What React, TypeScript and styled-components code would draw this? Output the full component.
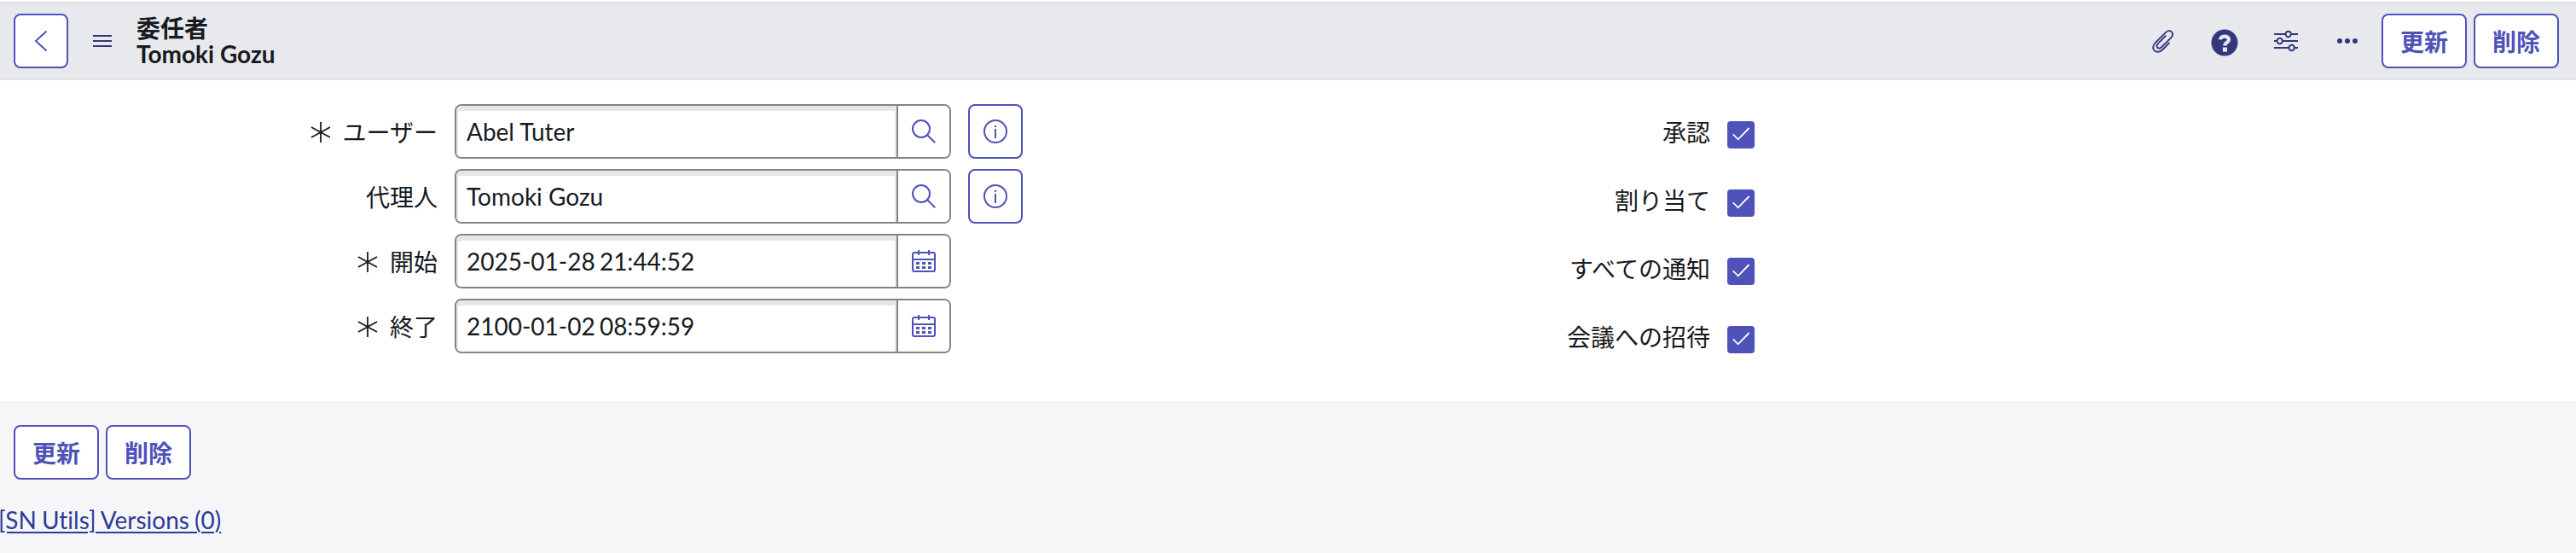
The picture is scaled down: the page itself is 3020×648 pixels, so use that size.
import React from "react";
import styled, { createGlobalStyle, css } from "styled-components";

const primary = "#4f52b8";
const dark = "#34377c";
const ink = "#181a21";
const fieldBorder = "#81848f";

const GlobalStyle = createGlobalStyle`
  * { box-sizing: border-box; }
  body {
    margin: 0;
    background: #fff;
    color: ${ink};
    font: 400 28px/32px Lato, "Noto Sans CJK JP", sans-serif;
    overflow: hidden;
  }
`;

const Page = styled.div`
  display: flex;
  flex-direction: column;
  height: 648px;
  padding-top: 2px;
  overflow: hidden;
`;

const Header = styled.header`
  display: flex;
  align-items: center;
  height: 92px;
  flex: none;
  padding: 0 20px 0 16px;
  background: #e8e9ed;
  border-top: 2px solid #dfe0de;
  border-bottom: 2px solid #e4e5e8;
`;

const outlined = css`
  display: flex;
  align-items: center;
  justify-content: center;
  height: 64px;
  padding: 0;
  flex: none;
  background: #fff;
  border: 2px solid ${primary};
  border-radius: 8px;
  color: ${primary};
`;

const HeaderSide = styled.div`
  display: flex;
  align-items: center;
  height: 64px;
`;

const ToolIcons = styled.div`
  display: flex;
  margin-right: 4px;
`;

const SquareButton = styled.button`
  ${outlined}
  width: 64px;
`;

const ActionButton = styled.button`
  ${outlined}
  width: 100px;
  font: 700 28px/32px "Noto Sans CJK JP", sans-serif;
`;

const Actions = styled.div`
  display: flex;
  gap: 8px;
`;

const IconButton = styled.button<{ $w?: number }>`
  display: flex;
  align-items: center;
  justify-content: center;
  width: ${(p) => p.$w ?? 72}px;
  height: 64px;
  padding: 0;
  border: 0;
  background: none;
  color: ${dark};
`;

const Title = styled.h1`
  display: flex;
  flex-direction: column;
  margin: 0 auto 0 0;
  font-size: 28px;
  line-height: 31px;
  font-weight: 700;
`;

const RecordName = styled.span`
  line-height: 29px;
`;

const Form = styled.main`
  display: grid;
  grid-template-columns: 1510px 1510px;
  height: 376px;
  flex: none;
  padding-top: 28px;
`;

const Column = styled.div<{ $gap: number }>`
  display: flex;
  flex-direction: column;
  gap: ${(p) => p.$gap}px;
`;

const Row = styled.div`
  display: flex;
  align-items: center;
  height: 64px;
`;

const Label = styled.label<{ $w: number }>`
  display: flex;
  align-items: center;
  justify-content: flex-end;
  gap: 14px;
  width: ${(p) => p.$w}px;
  padding-top: 2px;
`;

const Group = styled.div`
  display: flex;
  width: 582px;
  height: 64px;
  margin: 0 20px;
  border: 2px solid ${fieldBorder};
  border-radius: 8px;
  overflow: hidden;
  background: #fff;
`;

const Input = styled.input<{ $date: boolean }>`
  flex: 1;
  min-width: 0;
  padding: 0 12px;
  border: 0;
  outline: 0;
  background: #fff;
  box-shadow: inset 0 6px 0 #e6e8e7, inset 2px 0 0 #e6e8e7, inset -2px 0 0 #e6e8e7;
  border-top-left-radius: 6px;
  color: ${ink};
  font: 400 28px/32px Lato, sans-serif;
  word-spacing: ${(p) => (p.$date ? "-2px" : "0")};
`;

const Addon = styled.button`
  display: flex;
  align-items: center;
  justify-content: center;
  width: 62px;
  padding: 0;
  border: 0;
  border-left: 2px solid ${fieldBorder};
  background: #fff;
  color: ${primary};
`;

const Checkbox = styled.span`
  display: flex;
  width: 32px;
  height: 32px;
  margin: 8px 0 0 20px;
  border-radius: 4px;
  background: ${primary};
`;

const Footer = styled.footer`
  flex: 1;
  padding: 28px 16px 0;
  background: #f6f6f8;
`;

const RelatedLink = styled.a`
  display: block;
  width: max-content;
  margin: 31px 0 0 -18px;
  color: #2e3a97;
  word-spacing: -1px;
  font-variant-ligatures: none;
  text-decoration: underline;
  text-decoration-thickness: 2px;
  text-underline-offset: 3px;
`;

const Back = () => (
  <svg width="28" height="28" viewBox="0 0 28 28" fill="none" stroke="currentColor" strokeWidth="2">
    <path d="M20.500 2.500 8 14l12.500 11.500" />
  </svg>
);

const Menu = () => (
  <svg width="22" height="16" viewBox="0 0 22 16" fill="currentColor">
    <path d="M0 1h22v2H0zM0 7h22v2H0zM0 13h22v2H0z" />
  </svg>
);

const Clip = () => (
  <svg width="28" height="32" viewBox="0 0 28 32" fill="none" stroke="currentColor" strokeWidth="1.900">
    <path d="m17.300 9.500-9.200 9.400c-3.700 3.900.6 7.700 4 4.400l11-10.900c5.400-5.500-1-11.200-6.200-6.300L5 17.800c-7.400 7.700 1.300 15.100 8.200 8.400l8.300-8.400" />
  </svg>
);

const HelpMark = styled.svg`
  margin-top: 4px;
`;

const Help = () => (
  <HelpMark width="32" height="32" viewBox="0 0 32 32" fill="none">
    <circle cx="16" cy="16" r="15.500" fill="currentColor" />
    <path d="M11 12.300c.3-5 10-5 10 .2 0 3.700-4.700 3-4.700 7" stroke="#e8e9ed" strokeWidth="4.200" />
    <path d="M13.900 21.500h5v5.200h-5z" fill="#e8e9ed" />
  </HelpMark>
);

const Sliders = () => (
  <svg width="28" height="26" viewBox="0 0 28 26" fill="none" stroke="currentColor" strokeWidth="2">
    <path d="M0 5h13M20 5h8M0 13h3M10 13h18M0 21h17M24 21h4" />
    <circle cx="16.700" cy="5" r="3.200" />
    <circle cx="6.700" cy="13" r="3.200" />
    <circle cx="20.700" cy="21" r="3.200" />
  </svg>
);

const More = () => (
  <svg width="24" height="6" viewBox="0 0 24 6" fill="currentColor">
    <circle cx="3" cy="3" r="3" />
    <circle cx="12" cy="3" r="3" />
    <circle cx="21" cy="3" r="3" />
  </svg>
);

const Star = () => (
  <svg width="24" height="26" viewBox="0 0 24 26" fill="none" stroke="currentColor" strokeWidth="1.800">
    <path d="M12 1v24M1 7l22 12M23 7 1 19" />
  </svg>
);

const Search = () => (
  <svg width="28" height="28" viewBox="0 0 28 28" fill="none" stroke="currentColor" strokeWidth="2">
    <circle cx="11" cy="11" r="10" />
    <path d="m18.200 18.200 9 9" />
  </svg>
);

const Calendar = () => (
  <svg width="28" height="28" viewBox="0 0 28 28" fill="none" stroke="currentColor" strokeWidth="2">
    <rect x="1" y="4" width="26" height="22" rx="2" />
    <path d="M1 12h26M8 1v6M20 1v6" />
    <path d="M5 16.500h4M12 16.500h4M19 16.500h4M5 21.500h4M12 21.500h4M19 21.500h4" strokeWidth="3" />
  </svg>
);

const Info = () => (
  <svg width="28" height="28" viewBox="0 0 28 28" fill="none" stroke="currentColor" strokeWidth="2">
    <circle cx="14" cy="14" r="13" />
    <path d="M14 11v11M14 7v2" />
  </svg>
);

const Check = () => (
  <svg width="32" height="32" viewBox="0 0 32 32" fill="none" stroke="#fff" strokeWidth="1.800">
    <path d="m6.700 15.300 6 6L25.600 8" />
  </svg>
);

const fields = [
  { label: "ユーザー", value: "Abel Tuter", required: true, reference: true },
  { label: "代理人", value: "Tomoki Gozu", required: false, reference: true },
  { label: "開始", value: "2025-01-28 21:44:52", required: true, reference: false },
  { label: "終了", value: "2100-01-02 08:59:59", required: true, reference: false },
];

const options = ["承認", "割り当て", "すべての通知", "会議への招待"];

const UpdateDelete = () => (
  <Actions>
    <ActionButton>更新</ActionButton>
    <ActionButton>削除</ActionButton>
  </Actions>
);

export default function App() {
  return (
    <Page>
      <GlobalStyle />
      <Header>
        <HeaderSide>
          <SquareButton aria-label="back"><Back /></SquareButton>
          <IconButton $w={80} aria-label="menu"><Menu /></IconButton>
        </HeaderSide>
        <Title>
          <span>委任者</span>
          <RecordName>Tomoki Gozu</RecordName>
        </Title>
        <HeaderSide>
          <ToolIcons>
            <IconButton><Clip /></IconButton>
            <IconButton><Help /></IconButton>
            <IconButton><Sliders /></IconButton>
            <IconButton><More /></IconButton>
          </ToolIcons>
          <UpdateDelete />
        </HeaderSide>
      </Header>
      <Form>
        <Column $gap={12}>
          {fields.map((f) => (
            <Row key={f.label}>
              <Label $w={513}>
                {f.required && <Star />}
                {f.label}
              </Label>
              <Group>
                <Input defaultValue={f.value} $date={!f.reference} />
                <Addon>{f.reference ? <Search /> : <Calendar />}</Addon>
              </Group>
              {f.reference && <SquareButton aria-label="info"><Info /></SquareButton>}
            </Row>
          ))}
        </Column>
        <Column $gap={16}>
          {options.map((o) => (
            <Row key={o}>
              <Label $w={495}>{o}</Label>
              <Checkbox><Check /></Checkbox>
            </Row>
          ))}
        </Column>
      </Form>
      <Footer>
        <UpdateDelete />
        <RelatedLink>[SN Utils] Versions (0)</RelatedLink>
      </Footer>
    </Page>
  );
}
